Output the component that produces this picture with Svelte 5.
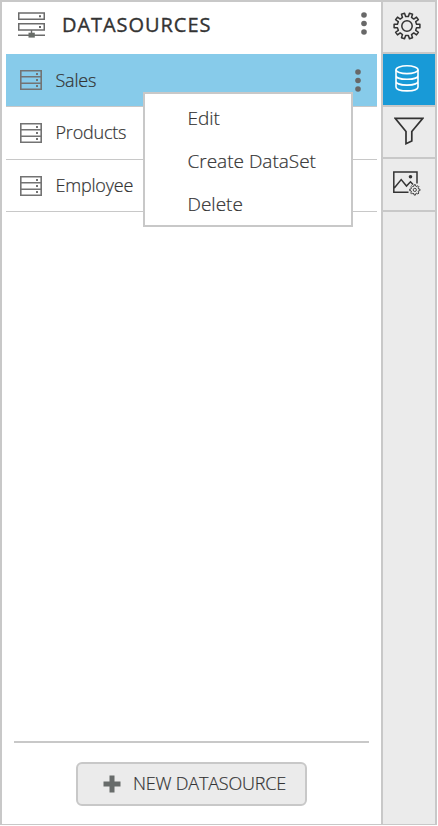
<script>
  const sources = ['Sales', 'Products', 'Employee'];
  const actions = ['Edit', 'Create DataSet', 'Delete'];
  const tabs = ['settings', 'data', 'filter', 'image'];
  let selected = $state('Sales');
  let active = $state('data');

  // Outline of a cog centred on (c, c); start shifts the first tooth by a fraction of a step.
  function cog(c, outer, inner, teeth, start = 0) {
    const pts = [];
    const step = 360 / teeth;
    for (let i = 0; i < teeth; i++) {
      const mid = (i + start) * step - 90;
      for (const [offset, r] of [[-0.27, inner], [-0.2, outer], [0.2, outer], [0.27, inner]]) {
        const a = (mid + offset * step) * Math.PI / 180;
        pts.push(`${(c + r * Math.cos(a)).toFixed(2)} ${(c + r * Math.sin(a)).toFixed(2)}`);
      }
    }
    return `M${pts.join('L')}Z`;
  }
</script>

{#snippet dots()}
  <svg width="6" height="24" viewBox="0 0 6 24" fill="#686868">
    <circle cx="3" cy="3" r="2.8" /><circle cx="3" cy="11.5" r="2.8" /><circle cx="3" cy="20" r="2.8" />
  </svg>
{/snippet}

<div class="designer">
  <section class="panel">
    <header>
      <svg class="logo" width="28" height="27" viewBox="0 0 28 27" fill="none" stroke="#6b6b6b">
        <path d="M.75 1H26.25V7.2H.75ZM.75 11.8H26.25V18H.75Z" stroke-width="1.5" />
        <path d="M0 23.2H27M13.5 18V22" stroke-width="1.4" />
        <path d="M10.5 20.7H16.8V25.6H10.5Z" fill="#686c68" stroke="none" />
        <path d="M21 3.3h2v2h-2zM21 14h2v2h-2z" fill="#666" stroke="none" />
      </svg>
      <h1>DATASOURCES</h1>
      <button class="more" aria-label="More">{@render dots()}</button>
    </header>
    <ul class="list">
      {#each sources as name}
        <li class:selected={name === selected}>
          <button class="source" onclick={() => (selected = name)}>
            <svg width="22" height="20" viewBox="0 0 22 20" fill="none" stroke="#737373" stroke-width="1.6">
              <path d="M.8 .8H21.2V19.2H.8ZM0 6.8H22M0 13.2H22" />
              <path d="M16 3h2v2h-2zM16 9h2v2h-2zM16 15h2v2h-2z" fill="#737373" stroke="none" />
            </svg>
            <span class="name">{name}</span>
          </button>
          {#if name === selected}
            <button class="more" aria-label="Options">{@render dots()}</button>
            <div class="menu">
              {#each actions as action}<button>{action}</button>{/each}
            </div>
          {/if}
        </li>
      {/each}
    </ul>
    <footer>
      <button class="new">
        <svg width="18" height="18" viewBox="0 0 18 18"><path d="M6.5 .5h5v6h6v5h-6v6h-5v-6h-6v-5h6z" fill="#686c6b" /></svg>
        <span>NEW DATASOURCE</span>
      </button>
    </footer>
  </section>
  <nav>
    {#each tabs as tab}
      <button class:active={tab === active} aria-label={tab} onclick={() => (active = tab)}>
        {#if tab === 'settings'}
          <svg width="28" height="28" viewBox="0 0 28 28" fill="none" stroke="#333" stroke-width="1.5" stroke-linejoin="round">
            <path d={cog(14, 13, 9.7, 10, 0.5)} /><circle cx="14" cy="14" r="5.2" />
          </svg>
        {:else if tab === 'data'}
          <svg width="24" height="27" viewBox="0 0 24 27" fill="none" stroke="#fff" stroke-width="1.6">
            <ellipse cx="12" cy="4.7" rx="11" ry="3.9" />
            <path d="M1 4.7V22c0 5.2 22 5.2 22 0V4.7M1 10.4c0 5.2 22 5.2 22 0M1 16.2c0 5.2 22 5.2 22 0" />
          </svg>
        {:else if tab === 'filter'}
          <svg width="30" height="28" viewBox="0 0 30 28" fill="none" stroke="#333" stroke-width="1.7">
            <path d="M1.2 1.3H28.8L17.8 14.5V24L12 26.7V14.5Z" />
          </svg>
        {:else}
          <svg width="28" height="25" viewBox="0 0 28 25" fill="none" stroke="#333" stroke-width="1.5">
            <path d="M15.5 21.2H.8V1H24V12.5M1.3 17L8.2 8.6L13.5 15L17.5 10.8L20 13.5" />
            <circle cx="17.5" cy="5.8" r="1.8" fill="#333" stroke="none" />
            <g transform="translate(16.3 13.4)" stroke-width="1" stroke="#444"><path d={cog(5.5, 5.2, 3.9, 8)} /><circle cx="5.5" cy="5.5" r="1.6" /></g>
          </svg>
        {/if}
      </button>
    {/each}
  </nav>
</div>

<style>
  :global(body) { background: #fff; }
  .designer {
    box-sizing: border-box; width: 437px; height: 825px; display: flex;
    border: 2px solid #c8c8c8; border-bottom-width: 1px;
    font-family: "Open Sans", "Noto Sans", sans-serif; color: #333; background: #fff;
  }
  button { border: 0; padding: 0; margin: 0; background: none; font: inherit; color: inherit; cursor: pointer; }
  svg { display: block; flex: none; }
  .panel { width: 379px; display: flex; flex-direction: column; border-right: 2px solid #c8c8c8; }
  header { height: 52px; display: flex; align-items: center; padding: 0 14px 0 16px; }
  .logo { margin-top: -5px; }
  h1 { margin: -6px auto 0 16px; font-size: 20px; line-height: 28px; font-weight: 400; letter-spacing: .95px; -webkit-text-stroke: .35px #333; white-space: nowrap; }
  header .more { margin-top: -9px; }
  .list { list-style: none; margin: 0 4px; padding: 0; }
  li { position: relative; height: 52px; display: flex; align-items: center; justify-content: space-between; padding: 0 16px 0 14px; border-bottom: 1px solid #c8c8c8; }
  li:last-child { height: 51px; }
  li.selected { background: #87cbea; }
  li .more { margin-top: 2px; }
  .source { display: flex; align-items: center; gap: 13.5px; font-size: 18px; line-height: 26px; font-weight: 300; -webkit-text-stroke: .2px #333; }
  .name { letter-spacing: -.2px; margin-top: -2px; }
  .selected .name { margin-top: 0; }
  .menu {
    position: absolute; z-index: 2; left: 137px; top: 38px; width: 210px; height: 135px; box-sizing: border-box;
    display: flex; flex-direction: column; padding-top: 3px; background: #fff; border: 2px solid #c8c8c8;
  }
  .menu button { height: 43px; padding-left: 42.5px; text-align: left; font-size: 19px; font-weight: 300; -webkit-text-stroke: .2px #333; }
  footer { margin: auto 12px 0; height: 83px; box-sizing: border-box; border-top: 2px solid #c8c8c8; padding-top: 19px; }
  .new {
    margin-left: 62px; box-sizing: border-box; width: 231px; height: 44px; display: flex; align-items: center; gap: 12px;
    padding-left: 25px; border: 2px solid #c8c8c8; border-radius: 6px; background: #ebebeb; font-size: 18px; font-weight: 300; letter-spacing: -.2px; white-space: nowrap; -webkit-text-stroke: .2px #333;
  }
  .new span { margin-top: -2px; }
  nav { width: 52px; background: #ebebeb; display: flex; flex-direction: column; }
  nav button { height: 53px; box-sizing: border-box; border-bottom: 2px solid #c8c8c8; display: flex; align-items: center; justify-content: center; padding: 0 4px 2px 0; }
  nav button:nth-child(odd) { height: 52px; }
  nav button:nth-child(3) { padding: 0 1px 2px 0; }
  nav button.active { padding: 0 4px 3px 0; background: #189ad7; }
</style>
